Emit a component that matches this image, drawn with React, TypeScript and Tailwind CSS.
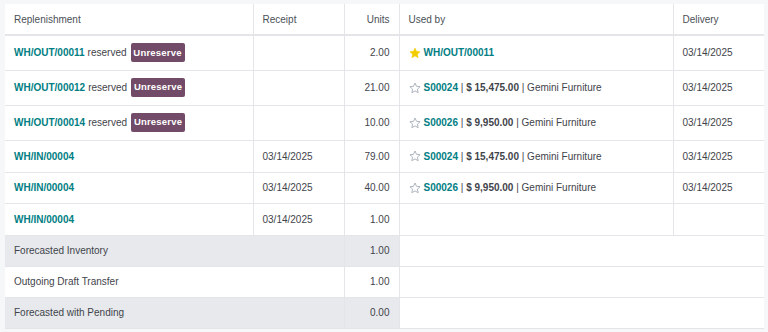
import React from 'react';

const LINK = 'text-[#017e84] font-bold';

function Star({ filled }: { filled?: boolean }) {
  return (
    <svg width="12" height="12" viewBox="0 0 24 24" className="shrink-0">
      <path
        d="M12 2l3 6.6 7.2.8-5.4 4.9 1.5 7.1L12 17.8l-6.3 3.6 1.5-7.1-5.4-4.9 7.2-.8z"
        fill={filled ? '#f3cc00' : 'none'}
        stroke={filled ? '#f3cc00' : '#9ca3af'}
        strokeWidth={filled ? 1 : 1.6}
        strokeLinejoin="round"
      />
    </svg>
  );
}

function UnreserveButton() {
  return (
    <span className="ml-[4px] inline-flex h-[19px] w-[54px] items-center justify-center rounded-[2px] bg-[#714b67] text-[9.5px] font-bold tracking-[0.2px] text-white">
      Unreserve
    </span>
  );
}

function UsedBy({ star, code, amount }: { star?: boolean; code: string; amount?: string }) {
  return (
    <div className="flex items-center gap-[3px]">
      <Star filled={star} />
      <span className="whitespace-pre">
        <span className={LINK}>{code}</span>
        {amount && (
          <>
            {' | '}
            <span className="font-bold">{amount}</span>
            {' | Gemini Furniture'}
          </>
        )}
      </span>
    </div>
  );
}

const td = 'border border-[#e3e5e8] px-[9px] align-middle';

export default function App() {
  const moves = [
    { ref: 'WH/OUT/00011', reserved: true, receipt: '', units: '2.00', star: true, code: 'WH/OUT/00011', amount: '', delivery: '03/14/2025', h: 'h-[35px]' },
    { ref: 'WH/OUT/00012', reserved: true, receipt: '', units: '21.00', star: false, code: 'S00024', amount: '$ 15,475.00', delivery: '03/14/2025', h: 'h-[35px]' },
    { ref: 'WH/OUT/00014', reserved: true, receipt: '', units: '10.00', star: false, code: 'S00026', amount: '$ 9,950.00', delivery: '03/14/2025', h: 'h-[35px]' },
    { ref: 'WH/IN/00004', reserved: false, receipt: '03/14/2025', units: '79.00', star: false, code: 'S00024', amount: '$ 15,475.00', delivery: '03/14/2025', h: 'h-[32px]' },
    { ref: 'WH/IN/00004', reserved: false, receipt: '03/14/2025', units: '40.00', star: false, code: 'S00026', amount: '$ 9,950.00', delivery: '03/14/2025', h: 'h-[31px]' },
    { ref: 'WH/IN/00004', reserved: false, receipt: '03/14/2025', units: '1.00', star: false, code: '', amount: '', delivery: '', h: 'h-[32px]' },
  ];

  const totals = [
    { label: 'Forecasted Inventory', value: '1.00', gray: true },
    { label: 'Outgoing Draft Transfer', value: '1.00', gray: false },
    { label: 'Forecasted with Pending', value: '0.00', gray: true },
  ];

  return (
    <div className="h-[332px] w-[768px] bg-[#f6f7f9] pl-[5px] pt-[4px] font-['Liberation_Sans',Arial,sans-serif] text-[10px] text-[#3f444b]">
      <table className="w-[759px] table-fixed border-collapse bg-white">
        <colgroup>
          <col className="w-[248px]" />
          <col className="w-[91px]" />
          <col className="w-[55px]" />
          <col className="w-[274px]" />
          <col className="w-[91px]" />
        </colgroup>
        <thead>
          <tr className="h-[31px] text-[#4b5057]">
            <th className={`${td} border-b-2 border-t-0 border-l-0 text-left font-normal`}>Replenishment</th>
            <th className={`${td} border-b-2 border-t-0 text-left font-normal`}>Receipt</th>
            <th className={`${td} border-b-2 border-t-0 text-right font-normal`}>Units</th>
            <th className={`${td} border-b-2 border-t-0 text-left font-normal`}>Used by</th>
            <th className={`${td} border-b-2 border-t-0 border-r-0 text-left font-normal`}>Delivery</th>
          </tr>
        </thead>
        <tbody>
          {moves.map((m, i) => (
            <tr key={i} className={m.h}>
              <td className={`${td} border-l-0`}>
                <div className="flex items-center">
                  <span className={LINK}>{m.ref}</span>
                  {m.reserved && (
                    <>
                      <span className="ml-[3px]">reserved</span>
                      <UnreserveButton />
                    </>
                  )}
                </div>
              </td>
              <td className={td}>{m.receipt}</td>
              <td className={`${td} text-right`}>{m.units}</td>
              <td className={td}>
                {m.code && <UsedBy star={m.star} code={m.code} amount={m.amount || undefined} />}
              </td>
              <td className={`${td} border-r-0`}>{m.delivery}</td>
            </tr>
          ))}
          {totals.map((t) => (
            <tr key={t.label} className="h-[31px]">
              <td colSpan={2} className={`${td} border-l-0 ${t.gray ? 'bg-[#e7e9ed]' : 'bg-white'}`}>
                {t.label}
              </td>
              <td className={`${td} text-right ${t.gray ? 'bg-[#e7e9ed]' : 'bg-white'}`}>{t.value}</td>
              <td colSpan={2} className={`${td} border-r-0 bg-white`} />
            </tr>
          ))}
        </tbody>
      </table>
    </div>
  );
}
